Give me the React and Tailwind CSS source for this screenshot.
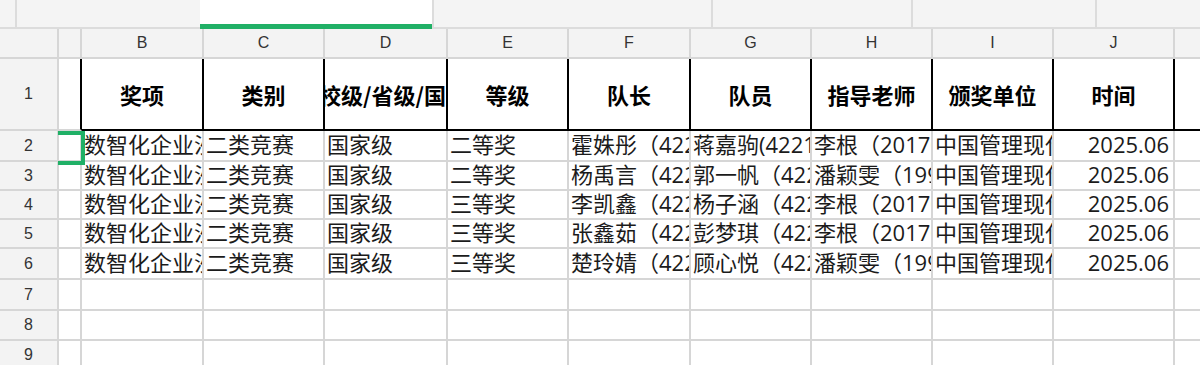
import React from "react";

const W = [
  "w-[59px]",
  "w-[23px]",
  "w-[122px]",
  "w-[121px]",
  "w-[123px]",
  "w-[121px]",
  "w-[122px]",
  "w-[121px]",
  "w-[121px]",
  "w-[121px]",
  "w-[121px]",
];

const letters = ["B", "C", "D", "E", "F", "G", "H", "I", "J"];
const headers = ["奖项", "类别", "校级/省级/国家级", "等级", "队长", "队员", "指导老师", "颁奖单位", "时间"];

const rows = [
  { n: 2, h: "h-[31px]", d: ["数智化企业沙盘模拟经营大赛", "二类竞赛", "国家级", "二等奖", "霍姝彤（4221020105）", "蒋嘉驹(4221020112)", "李根（20170012）", "中国管理现代化研究会", "2025.06"] },
  { n: 3, h: "h-[29px]", d: ["数智化企业沙盘模拟经营大赛", "二类竞赛", "国家级", "二等奖", "杨禹言（4221020118）", "郭一帆（4221020121）", "潘颖雯（19990021）", "中国管理现代化研究会", "2025.06"] },
  { n: 4, h: "h-[29px]", d: ["数智化企业沙盘模拟经营大赛", "二类竞赛", "国家级", "三等奖", "李凯鑫（4221020130）", "杨子涵（4221020133）", "李根（20170012）", "中国管理现代化研究会", "2025.06"] },
  { n: 5, h: "h-[29px]", d: ["数智化企业沙盘模拟经营大赛", "二类竞赛", "国家级", "三等奖", "张鑫茹（4221020140）", "彭梦琪（4221020143）", "李根（20170012）", "中国管理现代化研究会", "2025.06"] },
  { n: 6, h: "h-[31px]", d: ["数智化企业沙盘模拟经营大赛", "二类竞赛", "国家级", "三等奖", "楚玲婧（4221020150）", "顾心悦（4221020153）", "潘颖雯（19990021）", "中国管理现代化研究会", "2025.06"] },
];

const emptyRows = [
  { n: 7, h: "h-[31px]" },
  { n: 8, h: "h-[30px]" },
  { n: 9, h: "h-[30px]" },
];

const grid = "border-[#d6d6d6]";

function RowHead({ n, h }) {
  return (
    <div
      className={`${W[0]} ${h} shrink-0 flex items-center justify-center bg-[#f3f3f3] border-r-2 border-b-2 ${grid} text-[16px] text-[#333] font-['Liberation_Sans',sans-serif]`}
    >
      {n}
    </div>
  );
}

export default function App() {
  return (
    <div className="relative w-[1200px] h-[365px] overflow-hidden bg-white font-['Open_Sans','Noto_Sans_CJK_SC',sans-serif] text-[#1b1b1b]">
      {/* top tab bar */}
      <div className="flex h-[29px]">
        <div className="w-[17px] shrink-0 bg-[#f4f4f4] border-r-2 border-b-2 border-[#dcdcdc]" />
        <div className="w-[183px] shrink-0 bg-[#f4f4f4] border-b-2 border-[#dcdcdc]" />
        <div className="w-[232px] shrink-0 bg-white border-b-[5px] border-[#20b066]" />
        <div className="w-[281px] shrink-0 bg-[#f4f4f4] border-l-2 border-r-2 border-b-2 border-[#dcdcdc]" />
        <div className="w-[200px] shrink-0 bg-[#f4f4f4] border-r-2 border-b-2 border-[#dcdcdc]" />
        <div className="w-[184px] shrink-0 bg-[#f4f4f4] border-r-2 border-b-2 border-[#dcdcdc]" />
        <div className="flex-1 bg-[#f4f4f4] border-b-2 border-[#dcdcdc]" />
      </div>

      {/* column letters */}
      <div className="flex h-[30px]">
        <div className={`${W[0]} shrink-0 bg-[#f3f3f3] border-r-2 border-b-2 ${grid}`} />
        <div className={`${W[1]} shrink-0 bg-[#f3f3f3] border-r-2 border-b-2 ${grid}`} />
        {letters.map((l, i) => (
          <div
            key={l}
            className={`${W[i + 2]} shrink-0 flex items-center justify-center bg-[#f3f3f3] border-r-2 border-b-2 ${grid} text-[16px] text-[#333] font-['Liberation_Sans',sans-serif]`}
          >
            {l}
          </div>
        ))}
        <div className={`flex-1 bg-[#f3f3f3] border-b-2 ${grid}`} />
      </div>

      {/* row 1 header */}
      <div className="flex h-[72px]">
        <RowHead n={1} h="h-[72px]" />
        <div className={`${W[1]} shrink-0 bg-white border-r-2 border-b-2 border-r-black border-b-[#d6d6d6]`} />
        {headers.map((t, i) => (
          <div
            key={t}
            className={`${W[i + 2]} shrink-0 flex items-center ${i === 2 ? "justify-start" : "justify-center"} overflow-hidden whitespace-nowrap bg-white border-r-2 border-b-2 border-black text-[22px] font-bold text-black leading-none font-['Noto_Sans_CJK_SC',sans-serif]`}
          >
            <span className={`shrink-0 ${i === 2 ? "ml-[-6px]" : ""}`}>{t}</span>
          </div>
        ))}
        <div className="flex-1 bg-white border-b-2 border-black" />
      </div>

      {/* data rows */}
      {rows.map((r) => (
        <div key={r.n} className="flex">
          <RowHead n={r.n} h={r.h} />
          <div className={`${W[1]} ${r.h} shrink-0 bg-white border-r-2 border-b-2 ${grid}`} />
          {r.d.map((t, i) => (
            <div
              key={i}
              className={`${W[i + 2]} ${r.h} shrink-0 flex items-center ${i === 8 ? "justify-end pr-[4px]" : "justify-start pl-[2px]"} pb-[3px] overflow-hidden whitespace-nowrap bg-white border-r-2 border-b-2 ${grid} text-[22px] leading-none`}
            >
              <span className="shrink-0">{t}</span>
            </div>
          ))}
          <div className={`flex-1 ${r.h} bg-white border-b-2 ${grid}`} />
        </div>
      ))}

      {emptyRows.map((r) => (
        <div key={r.n} className="flex">
          <RowHead n={r.n} h={r.h} />
          {W.slice(1).map((w, i) => (
            <div key={i} className={`${w} ${r.h} shrink-0 bg-white border-r-2 border-b-2 ${grid}`} />
          ))}
          <div className={`flex-1 ${r.h} bg-white border-b-2 ${grid}`} />
        </div>
      ))}

      {/* active cell selection (A2) */}
      <div className="absolute left-[58px] top-[131px] w-[27px] h-[34px] z-10 flex flex-col pointer-events-none">
        <div className="h-[4px] w-full bg-[#20b066]" />
        <div className="flex-1 flex justify-end">
          <div className="w-[4px] h-full bg-[#20b066]" />
        </div>
        <div className="h-[4px] w-full bg-[#20b066]" />
      </div>
    </div>
  );
}
